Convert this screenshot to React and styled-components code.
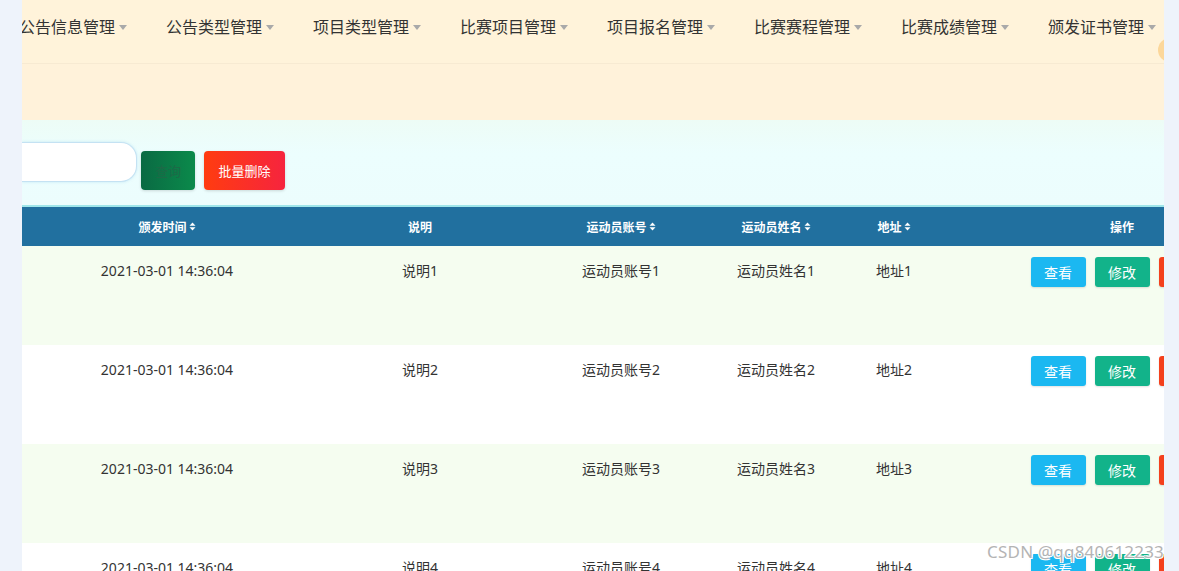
import styled, { createGlobalStyle } from 'styled-components';

const GlobalStyle = createGlobalStyle`
  html, body {
    margin: 0;
    padding: 0;
    background: #eef3fb;
    font-family: "Noto Sans", "Noto Sans CJK SC", sans-serif;
  }
`;

const menus = ['公告信息管理', '公告类型管理', '项目类型管理', '比赛项目管理', '项目报名管理', '比赛赛程管理', '比赛成绩管理', '颁发证书管理'];

const columns = [
  { title: '颁发时间', width: 290, sort: true },
  { title: '说明', width: 216 },
  { title: '运动员账号', width: 186, sort: true },
  { title: '运动员姓名', width: 124, sort: true },
  { title: '地址', width: 112, sort: true },
  { title: '操作', width: 344 },
];

const rows = [1, 2, 3, 4].map(i => ({
  time: '2021-03-01 14:36:04',
  note: '说明' + i,
  account: '运动员账号' + i,
  name: '运动员姓名' + i,
  addr: '地址' + i,
}));

const gridCols = columns.map(c => c.width + 'px').join(' ');

function SortIcon() {
  return (
    <svg width="7" height="9" viewBox="0 0 7 9" style={{ marginLeft: 1 }}>
      <path d="M3.5 0.5 L6.5 3.8 L0.5 3.8 Z" fill="#fff" />
      <path d="M3.5 8.5 L6.5 5.2 L0.5 5.2 Z" fill="#fff" />
    </svg>
  );
}

export default function App() {
  return (
    <>
      <GlobalStyle />
      <Page>
        <Main>
          <TopBar>
            <MenuList>
              {menus.map(m => (
                <MenuItem key={m}>
                  {m}
                  <Caret />
                </MenuItem>
              ))}
              <Avatar />
            </MenuList>
          </TopBar>
          <Banner />
          <SearchBar>
            <SearchInput />
            <Button $variant="search">查询</Button>
            <Button $variant="danger">批量删除</Button>
          </SearchBar>
          <TableWrap>
            <HeaderRow>
              {columns.map(c => (
                <HeadCell key={c.title}>
                  {c.title}
                  {c.sort && <SortIcon />}
                </HeadCell>
              ))}
            </HeaderRow>
            {rows.map((r, i) => (
              <Row key={i} $odd={i % 2 === 0}>
                <Cell>{r.time}</Cell>
                <Cell>{r.note}</Cell>
                <Cell>{r.account}</Cell>
                <Cell>{r.name}</Cell>
                <Cell>{r.addr}</Cell>
                <ActionCell>
                  <RowButton $color="#1bb8f1">查看</RowButton>
                  <RowButton $color="#12b38a">修改</RowButton>
                  <RowButton $color="#f4401c">删除</RowButton>
                </ActionCell>
              </Row>
            ))}
          </TableWrap>
          <Watermark>CSDN @qq840612233</Watermark>
        </Main>
      </Page>
    </>
  );
}

const Page = styled.div`
  width: 1179px;
  height: 571px;
  padding-left: 22px;
  box-sizing: border-box;
  overflow: hidden;
`;

const Main = styled.div`
  position: relative;
  width: 1142px;
  height: 571px;
  overflow: hidden;
  display: flex;
  flex-direction: column;
`;

const TopBar = styled.div`
  height: 63px;
  flex-shrink: 0;
  background: #fff3da;
  border-bottom: 1px solid #f7ead2;
  box-shadow: 0 1px 2px rgba(200, 180, 140, 0.15);
  overflow: hidden;
`;

const MenuList = styled.div`
  display: flex;
  align-items: flex-start;
  margin-left: -3px;
  gap: 39px;
  height: 100%;
`;

const MenuItem = styled.div`
  display: flex;
  align-items: center;
  flex-shrink: 0;
  height: 52px;
  font-size: 16px;
  color: #333;
  white-space: nowrap;
`;

const Caret = styled.span`
  display: inline-block;
  margin-left: 4px;
  margin-top: 2px;
  width: 0;
  height: 0;
  border-left: 4.5px solid transparent;
  border-right: 4.5px solid transparent;
  border-top: 5px solid #a9a9a9;
`;

const Avatar = styled.div`
  flex-shrink: 0;
  width: 24px;
  height: 24px;
  margin-top: 38px;
  margin-left: -37px;
  border-radius: 50%;
  background: #fcd79a;
`;

const Banner = styled.div`
  height: 56px;
  flex-shrink: 0;
  background: #fff2da;
`;

const SearchBar = styled.div`
  height: 85px;
  flex-shrink: 0;
  display: flex;
  align-items: flex-start;
  gap: 9px;
  background: linear-gradient(180deg, #edfcf6 0%, #ecfefe 40%, #ecfdfd 100%);
  box-sizing: border-box;
  padding-top: 22px;
`;

const SearchInput = styled.div`
  width: 115px;
  height: 40px;
  margin-right: -5px;
  box-sizing: border-box;
  background: #fff;
  border: 1px solid #c4e2f3;
  border-left: none;
  border-radius: 0 16px 16px 0;
  box-shadow: 0 0 3px rgba(120, 190, 230, 0.35);
`;

const Button = styled.button`
  margin-top: 9px;
  height: 39px;
  padding: 0;
  border: none;
  border-radius: 4px;
  font-family: inherit;
  font-size: 13px;
  width: ${p => (p.$variant === 'search' ? '54px' : '81px')};
  color: ${p => (p.$variant === 'search' ? '#1c6a47' : '#fff')};
  background: ${p =>
    p.$variant === 'search'
      ? 'linear-gradient(90deg, #0a6a43 0%, #0b8a4b 100%)'
      : 'linear-gradient(90deg, #ff3c10 0%, #f6243e 100%)'};
  box-shadow: 0 1px 3px rgba(0, 0, 0, 0.15);
`;

const TableWrap = styled.div`
  border-top: 2px solid #9fe6ea;
  width: 1272px;
  flex-shrink: 0;
`;

const HeaderRow = styled.div`
  display: grid;
  grid-template-columns: ${gridCols};
  height: 39px;
  background: #21709f;
`;

const HeadCell = styled.div`
  display: flex;
  align-items: center;
  justify-content: center;
  gap: 1px;
  color: #fff;
  font-size: 12px;
  font-weight: 700;
`;

const Row = styled.div`
  display: grid;
  grid-template-columns: ${gridCols};
  height: 99px;
  background: ${p => (p.$odd ? '#f5fdf0' : '#ffffff')};
`;

const Cell = styled.div`
  text-align: center;
  padding-top: 15px;
  font-size: 14px;
  line-height: 20px;
  color: #333;
`;

const ActionCell = styled.div`
  display: flex;
  justify-content: center;
  align-items: flex-start;
  gap: 9px;
  padding-top: 11px;
`;

const RowButton = styled.button`
  width: 55px;
  height: 30px;
  padding: 0;
  border: none;
  border-radius: 3px;
  background: ${p => p.$color};
  color: #fff;
  font-family: inherit;
  font-size: 14px;
  box-shadow: 0 1px 2px rgba(0, 0, 0, 0.12);
`;

const Watermark = styled.div`
  position: absolute;
  right: 0;
  bottom: 8px;
  font-size: 17px;
  color: #b4b4b4;
  letter-spacing: 0.2px;
  text-shadow: 1px 1px 0 #fff, -1px -1px 0 #fff, 1px -1px 0 #fff, -1px 1px 0 #fff;
`;
